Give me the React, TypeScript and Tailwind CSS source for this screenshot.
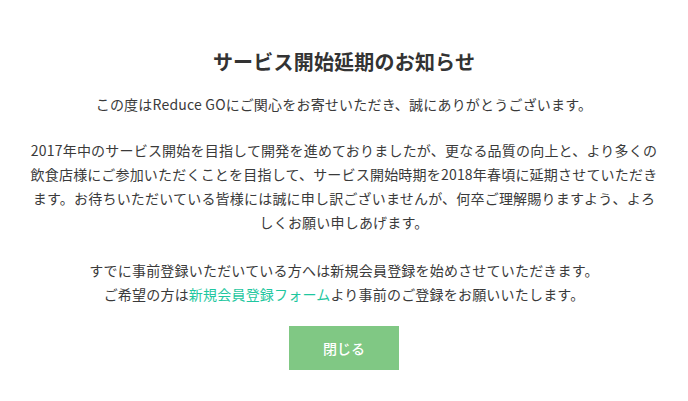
export default function App() {
  return (
    <div
      className="w-[688px] h-[401px] bg-white text-[#3a3a3a] flex flex-col items-center"
      style={{ fontFamily: '"Noto Sans CJK JP", "Noto Sans", sans-serif' }}
    >
      <h1 className="mt-[48px] text-[20px] leading-[28px] font-bold text-[#333] tracking-[0.2px]">
        サービス開始延期のお知らせ
      </h1>
      <p className="mt-[16px] text-[14px] leading-[24px] text-center tracking-[0.2px]">
        この度はReduce GOにご関心をお寄せいただき、誠にありがとうございます。
      </p>
      <p className="mt-[22px] text-[14px] leading-[24px] text-center tracking-[0.2px] whitespace-nowrap">
        2017年中のサービス開始を目指して開発を進めておりましたが、更なる品質の向上と、より多くの
        <br />
        飲食店様にご参加いただくことを目指して、サービス開始時期を2018年春頃に延期させていただき
        <br />
        ます。お待ちいただいている皆様には誠に申し訳ございませんが、何卒ご理解賜りますよう、よろ
        <br />
        しくお願い申しあげます。
      </p>
      <p className="mt-[24px] text-[14px] leading-[24px] text-center tracking-[0.2px]">
        すでに事前登録いただいている方へは新規会員登録を始めさせていただきます。
        <br />
        ご希望の方は<a className="text-[#1fc7a0]">新規会員登録フォーム</a>より事前のご登録をお願いいたします。
      </p>
      <button className="mt-[20px] w-[110px] h-[44px] bg-[#80c884] text-white text-[14px] font-medium">
        閉じる
      </button>
    </div>
  );
}
